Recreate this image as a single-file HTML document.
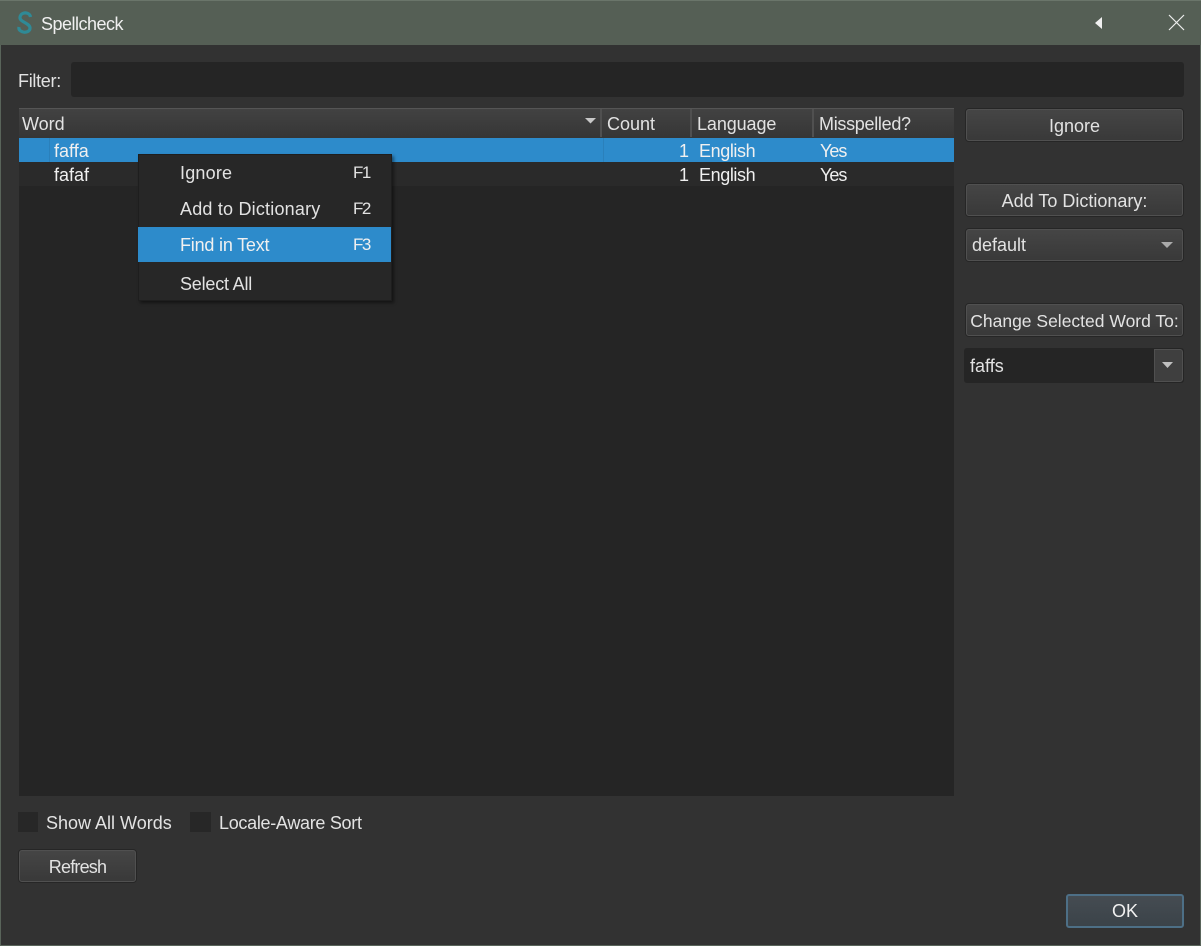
<!DOCTYPE html>
<html><head><meta charset="utf-8"><title>Spellcheck</title>
<style>
*{box-sizing:border-box}
html,body{margin:0;padding:0;width:1201px;height:946px;overflow:hidden;background:#323232}
body{position:relative;font-family:"Liberation Sans","Noto Sans CJK JP",sans-serif;font-size:18px;color:#e2e2e2}
.a{position:absolute}
.t{position:absolute;white-space:nowrap;line-height:24px;height:24px}
.btn{position:absolute;border:1px solid #505050;border-radius:3px;background:linear-gradient(#454545,#393939);box-shadow:0 0 0 1px #262626;text-align:center;white-space:nowrap}
.hd{position:absolute;top:108px;height:30px;background:linear-gradient(#424242,#363636);border-top:1px solid #555}
.sep{position:absolute;top:109px;width:2px;height:28px;background:#505050}
</style></head><body>
<div class="a" style="left:0;top:0;width:1201px;height:946px;border:1px solid #59645a"></div>
<div class="a" style="left:0;top:0;width:1201px;height:45px;background:#555f55;border-top:1px solid #6a756a"></div>
<svg class="a" style="left:15px;top:10px" width="20" height="26" viewBox="0 0 20 26"><path d="M15.500 7C15 3.500 11.500 2.500 9 3C5 4 4 8 6 10C9 13 15 14 15 18C15 22 10 22.800 7.500 21.800C5 21 3.500 19.500 4 17" fill="none" stroke="#2f8a96" stroke-width="3.200"/></svg>
<div class="t" style="left:41px;top:12px;color:#f0f0f0;letter-spacing:-.5px">Spellcheck</div>
<svg class="a" style="left:1090px;top:15px" width="14" height="18"><path d="M12 2L5 8L12 14Z" fill="#f0f0f0"/></svg>
<svg class="a" style="left:1167px;top:13px" width="20" height="20"><path d="M2 2L17 17M17 2L2 17" stroke="#eee" stroke-width="1.200" fill="none"/></svg>

<div class="t" style="left:18px;top:69px;letter-spacing:-.3px">Filter:</div>
<div class="a" style="left:71px;top:62px;width:1113px;height:35px;background:#252525;border-radius:3px"></div>

<div class="a" style="left:19px;top:138px;width:935px;height:658px;background:#252525"></div>
<div class="hd" style="left:19px;width:935px"></div>
<div class="sep" style="left:600px"></div><div class="sep" style="left:690px"></div><div class="sep" style="left:812px"></div>
<div class="t" style="left:22px;top:112px">Word</div>
<svg class="a" style="left:584px;top:117px" width="14" height="8"><path d="M1 1H12L6.500 6.500Z" fill="#c8c8c8"/></svg>
<div class="t" style="left:607px;top:112px">Count</div>
<div class="t" style="left:697px;top:112px;letter-spacing:-.1px">Language</div>
<div class="t" style="left:819px;top:112px;letter-spacing:-.3px">Misspelled?</div>

<div class="a" style="left:19px;top:138px;width:935px;height:24px;background:#2d8bcb"></div>
<div class="a" style="left:49px;top:138px;width:1px;height:24px;background:#2a80bb"></div>
<div class="a" style="left:603px;top:138px;width:1px;height:24px;background:#2a80bb"></div>
<div class="a" style="left:19px;top:162px;width:935px;height:24px;background:#2a2a2a"></div>
<div class="t" style="left:54px;top:139px;color:#f0f0f0">faffa</div>
<div class="t" style="left:54px;top:163px;color:#f0f0f0">fafaf</div>
<div class="t" style="left:679px;top:139px;color:#f0f0f0">1</div>
<div class="t" style="left:679px;top:163px;color:#f0f0f0">1</div>
<div class="t" style="left:699px;top:139px;color:#f0f0f0;letter-spacing:-.4px">English</div>
<div class="t" style="left:699px;top:163px;color:#f0f0f0;letter-spacing:-.4px">English</div>
<div class="t" style="left:820px;top:139px;color:#f0f0f0;letter-spacing:-1px">Yes</div>
<div class="t" style="left:820px;top:163px;color:#f0f0f0;letter-spacing:-1px">Yes</div>

<div class="a" style="left:138px;top:154px;width:254px;height:147px;background:#272727;border:1px solid #1e1e1e;box-shadow:2px 2px 3px rgba(0,0,0,.45)"></div>
<div class="a" style="left:138px;top:227px;width:253px;height:35px;background:#2d8bcb"></div>
<div class="t" style="left:180px;top:161px;letter-spacing:.2px">Ignore</div><div class="t" style="left:353px;top:161px;font-size:17px;letter-spacing:-1.500px">F1</div>
<div class="t" style="left:180px;top:197px;letter-spacing:.2px">Add to Dictionary</div><div class="t" style="left:353px;top:197px;font-size:17px;letter-spacing:-1.500px">F2</div>
<div class="t" style="left:180px;top:233px;color:#f0f0f0;letter-spacing:-.2px">Find in Text</div><div class="t" style="left:353px;top:233px;color:#f0f0f0;font-size:17px;letter-spacing:-1.500px">F3</div>
<div class="t" style="left:180px;top:272px;letter-spacing:-.2px">Select All</div>

<div class="btn" style="left:966px;top:109px;width:217px;height:32px;line-height:32px">Ignore</div>
<div class="btn" style="left:966px;top:184px;width:217px;height:32px;line-height:32px">Add To Dictionary:</div>
<div class="btn" style="left:966px;top:229px;width:217px;height:32px;line-height:30px;text-align:left;padding-left:5px">default</div>
<svg class="a" style="left:1160px;top:241px" width="14" height="8"><path d="M1 1H13L7 7Z" fill="#aaa"/></svg>
<div class="btn" style="left:966px;top:304px;width:217px;height:32px;line-height:32px;font-size:17.500px">Change Selected Word To:</div>
<div class="a" style="left:964px;top:348px;width:220px;height:35px;background:#252525;border-radius:3px"></div>
<div class="t" style="left:970px;top:354px">faffs</div>
<div class="a" style="left:1154px;top:349px;width:29px;height:33px;background:#3f3f3f;border:1px solid #505050;border-radius:0 3px 3px 0"></div>
<svg class="a" style="left:1161px;top:361px" width="14" height="8"><path d="M1 1H12L6.500 7Z" fill="#c0c0c0"/></svg>

<div class="a" style="left:18px;top:812px;width:20px;height:20px;background:#272727"></div>
<div class="t" style="left:46px;top:811px">Show All Words</div>
<div class="a" style="left:190px;top:812px;width:21px;height:20px;background:#272727"></div>
<div class="t" style="left:219px;top:811px;letter-spacing:-.3px">Locale-Aware Sort</div>
<div class="btn" style="left:19px;top:850px;width:117px;height:32px;line-height:32px;letter-spacing:-.8px">Refresh</div>
<div class="a" style="left:1066px;top:894px;width:118px;height:34px;border:2px solid #4d6f86;border-radius:3px;background:linear-gradient(#454c52,#3b4349);text-align:center;line-height:31px;color:#f0f0f0">OK</div>
</body></html>
